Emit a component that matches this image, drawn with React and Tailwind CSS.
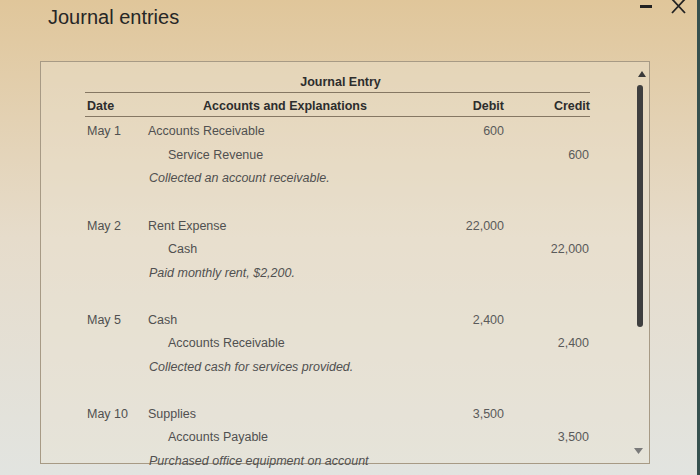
import React from "react";

const entries = [
  {
    date: "May 1",
    debitAcct: "Accounts Receivable",
    creditAcct: "Service Revenue",
    note: "Collected an account receivable.",
    amount: "600",
  },
  {
    date: "May 2",
    debitAcct: "Rent Expense",
    creditAcct: "Cash",
    note: "Paid monthly rent, $2,200.",
    amount: "22,000",
  },
  {
    date: "May 5",
    debitAcct: "Cash",
    creditAcct: "Accounts Receivable",
    note: "Collected cash for services provided.",
    amount: "2,400",
  },
  {
    date: "May 10",
    debitAcct: "Supplies",
    creditAcct: "Accounts Payable",
    note: "Purchased office equipment on account",
    amount: "3,500",
  },
];

function Row({ date, acct, indent, italic, debit, credit }) {
  return (
    <div className="flex h-[23.5px] items-center text-[12.5px] text-[#505050]">
      <div className="w-[60px] pl-[2px]">{date}</div>
      <div className={`w-[290px] ${indent ? "pl-[23px]" : italic ? "pl-[4px]" : "pl-[3px]"} ${italic ? "italic" : ""} whitespace-nowrap`}>
        {acct}
      </div>
      <div className="w-[70px] pr-[1px] text-right text-[#5a5a5a]">{debit}</div>
      <div className="w-[85px] pr-[1px] text-right text-[#5a5a5a]">{credit}</div>
    </div>
  );
}

export default function App() {
  return (
    <div
      className="relative h-[475px] w-[700px] overflow-hidden bg-gradient-to-b from-[#e0c69a] via-[#e6dccb] to-[#e2e4e0]"
      style={{ fontFamily: '"Liberation Sans", Arial, sans-serif' }}
    >
      {/* window controls */}
      <div className="absolute right-[14px] top-[-2px] flex items-center gap-[18px] text-[#222]">
        <div className="h-[3px] w-[12px] bg-[#222]" />
        <svg width="16" height="16" viewBox="0 0 16 16">
          <path d="M2 1 L15 15 M15 1 L2 15" stroke="#222" strokeWidth="1.8" fill="none" />
        </svg>
      </div>

      <div className="flex h-full border-r-[3px] border-[#36514f]">
        <div className="flex-1 pl-[40px] pt-[5px]">
          <h1 className="pl-[8px] text-[20px] leading-[24px] text-[#262626]">Journal entries</h1>

          <div className="mt-[32px] flex h-[403px] w-[610px] border border-[#a79a85] bg-[#ece3d3]/40">
            <div className="flex-1 pl-[44px] pt-[12px]">
              <div className="w-[505px]">
                <div className="h-[19px] border-b-[1.5px] border-[#857763] text-center text-[12.5px] font-bold leading-[16px] text-[#2d2d2d]">
                  <span className="pl-[6px]">Journal Entry</span>
                </div>
                <div className="flex h-[24px] items-center pt-[4px] border-b-[1.5px] border-[#857763] text-[12.5px] font-bold text-[#2d2d2d]">
                  <div className="w-[60px] pl-[2px]">Date</div>
                  <div className="w-[290px] pr-[10px] text-center">Accounts and Explanations</div>
                  <div className="w-[70px] pr-[1px] text-right">Debit</div>
                  <div className="w-[85px] text-right">Credit</div>
                </div>
                <div className="pt-[3px]">
                  {entries.map((e) => (
                    <div key={e.date}>
                      <Row date={e.date} acct={e.debitAcct} debit={e.amount} />
                      <Row acct={e.creditAcct} indent credit={e.amount} />
                      <Row acct={e.note} italic />
                      <div className="h-[23.7px]" />
                    </div>
                  ))}
                </div>
              </div>
            </div>

            {/* scrollbar */}
            <div className="flex w-[16px] flex-col items-center pt-[9px]">
              <svg width="8" height="6" viewBox="0 0 8 6" className="ml-[2px]">
                <path d="M4 0 L8 6 L0 6 Z" fill="#3a3a3a" />
              </svg>
              <div className="mr-[3px] mt-[8px] h-[242px] w-[6px] rounded-full bg-[#3f3f3f]" />
              <div className="flex-1" />
              <svg width="9" height="6" viewBox="0 0 9 6" className="mb-[9px] mr-[6px]">
                <path d="M0 0 L9 0 L4.5 6 Z" fill="#7a7a7a" />
              </svg>
            </div>
          </div>
        </div>
      </div>
    </div>
  );
}
